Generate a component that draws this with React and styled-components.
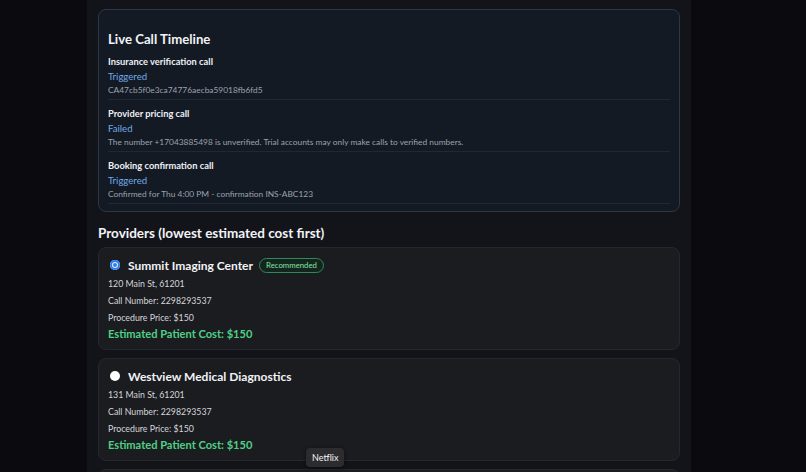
import React from "react";
import styled, { createGlobalStyle } from "styled-components";

const GlobalStyle = createGlobalStyle`
  html, body { margin: 0; padding: 0; background: #0b0b0f; overflow: hidden; }
  body { font-family: Lato, "Noto Sans", sans-serif; color: #e6e8ee; }
`;

const Page = styled.div`
  padding-left: 87px;
  height: 472px;
  overflow: hidden;
`;

const Column = styled.main`
  width: 604px;
  box-sizing: border-box;
  min-height: 472px;
  background: #131419;
  padding: 9px 11px 0;
  position: relative;
`;

const TimelinePanel = styled.section`
  background: #141a24;
  border: 1px solid #2c3747;
  border-radius: 8px;
  padding: 20px 9px 7px;
`;

const PanelHeading = styled.h3`
  margin: 0;
  font-size: 13.2px;
  line-height: 18px;
  font-weight: 700;
  color: #f1f3f7;
`;

const TimelineItem = styled.div`
  padding: 6px 0 3px;
  border-bottom: 1px solid #1f2936;
`;

const ItemTitle = styled.div`
  font-size: 9.3px;
  line-height: 15px;
  font-weight: 700;
  color: #eef0f4;
`;

const ItemStatus = styled.div`
  font-size: 9.6px;
  line-height: 15px;
  color: #6fa9e8;
`;

const ItemDetail = styled.div`
  font-size: 8.4px;
  line-height: 12px;
  color: #9aa2ad;
`;

const SectionTitle = styled.h2`
  margin: 12px 0 5px;
  font-size: 13.5px;
  line-height: 18px;
  font-weight: 700;
  color: #f1f3f7;
`;

const CardList = styled.div`
  display: flex;
  flex-direction: column;
  gap: 8px;
`;

const Card = styled.div`
  background: #1b1c20;
  border: 1px solid #26272c;
  border-radius: 8px;
  padding: 8px 9px 7px;
`;

const CardHeader = styled.div`
  display: flex;
  align-items: center;
  height: 18px;
  margin-bottom: 1px;
`;

const Radio = styled.span`
  width: 10px;
  height: 10px;
  border-radius: 50%;
  box-sizing: border-box;
  margin: 0 8px 0 2px;
  flex-shrink: 0;
  background: ${(p) => (p.$checked ? "#2f80ed" : "#ffffff")};
  box-shadow: ${(p) =>
    p.$checked ? "inset 0 0 0 2px #2f80ed, inset 0 0 0 3px #dfeaff" : "none"};
`;

const ProviderName = styled.span`
  font-size: 12px;
  font-weight: 700;
  color: #f2f3f6;
`;

const Badge = styled.span`
  margin-left: 6px;
  padding: 0 6px;
  height: 13px;
  display: inline-flex;
  align-items: center;
  border: 1px solid #2e8a5a;
  border-radius: 8px;
  font-size: 7.8px;
  color: #86e3a9;
  background: #14251d;
`;

const InfoLine = styled.div`
  font-size: 8.8px;
  line-height: 17px;
  color: #d4d6db;
`;

const Cost = styled.div`
  font-size: 11.1px;
  line-height: 16px;
  font-weight: 700;
  color: #4fcf85;
`;

const Tooltip = styled.div`
  position: absolute;
  left: 219px;
  top: 448px;
  padding: 0 6px;
  height: 19px;
  display: flex;
  align-items: center;
  background: #2b2b30;
  border-radius: 4px;
  font-size: 9px;
  color: #f3f3f3;
  box-shadow: 0 1px 4px rgba(0, 0, 0, 0.5);
`;

const calls = [
  {
    title: "Insurance verification call",
    status: "Triggered",
    detail: "CA47cb5f0e3ca74776aecba59018fb6fd5",
  },
  {
    title: "Provider pricing call",
    status: "Failed",
    detail:
      "The number +17043885498 is unverified. Trial accounts may only make calls to verified numbers.",
  },
  {
    title: "Booking confirmation call",
    status: "Triggered",
    detail: "Confirmed for Thu 4:00 PM - confirmation INS-ABC123",
  },
];

const providers = [
  {
    name: "Summit Imaging Center",
    address: "120 Main St, 61201",
    phone: "2298293537",
    price: "$150",
    cost: "$150",
    recommended: true,
    selected: true,
  },
  {
    name: "Westview Medical Diagnostics",
    address: "131 Main St, 61201",
    phone: "2298293537",
    price: "$150",
    cost: "$150",
  },
  {
    name: "Lakeside Radiology",
    address: "142 Main St, 61201",
    phone: "2298293537",
    price: "$175",
    cost: "$175",
  },
];

export default function App() {
  return (
    <>
      <GlobalStyle />
      <Page>
        <Column>
          <TimelinePanel>
            <PanelHeading>Live Call Timeline</PanelHeading>
            {calls.map((c) => (
              <TimelineItem key={c.title}>
                <ItemTitle>{c.title}</ItemTitle>
                <ItemStatus>{c.status}</ItemStatus>
                <ItemDetail>{c.detail}</ItemDetail>
              </TimelineItem>
            ))}
          </TimelinePanel>
          <SectionTitle>Providers (lowest estimated cost first)</SectionTitle>
          <CardList>
            {providers.map((p) => (
              <Card key={p.name}>
                <CardHeader>
                  <Radio $checked={p.selected} />
                  <ProviderName>{p.name}</ProviderName>
                  {p.recommended && <Badge>Recommended</Badge>}
                </CardHeader>
                <InfoLine>{p.address}</InfoLine>
                <InfoLine>Call Number: {p.phone}</InfoLine>
                <InfoLine>Procedure Price: {p.price}</InfoLine>
                <Cost>Estimated Patient Cost: {p.cost}</Cost>
              </Card>
            ))}
          </CardList>
          <Tooltip>Netflix</Tooltip>
        </Column>
      </Page>
    </>
  );
}
